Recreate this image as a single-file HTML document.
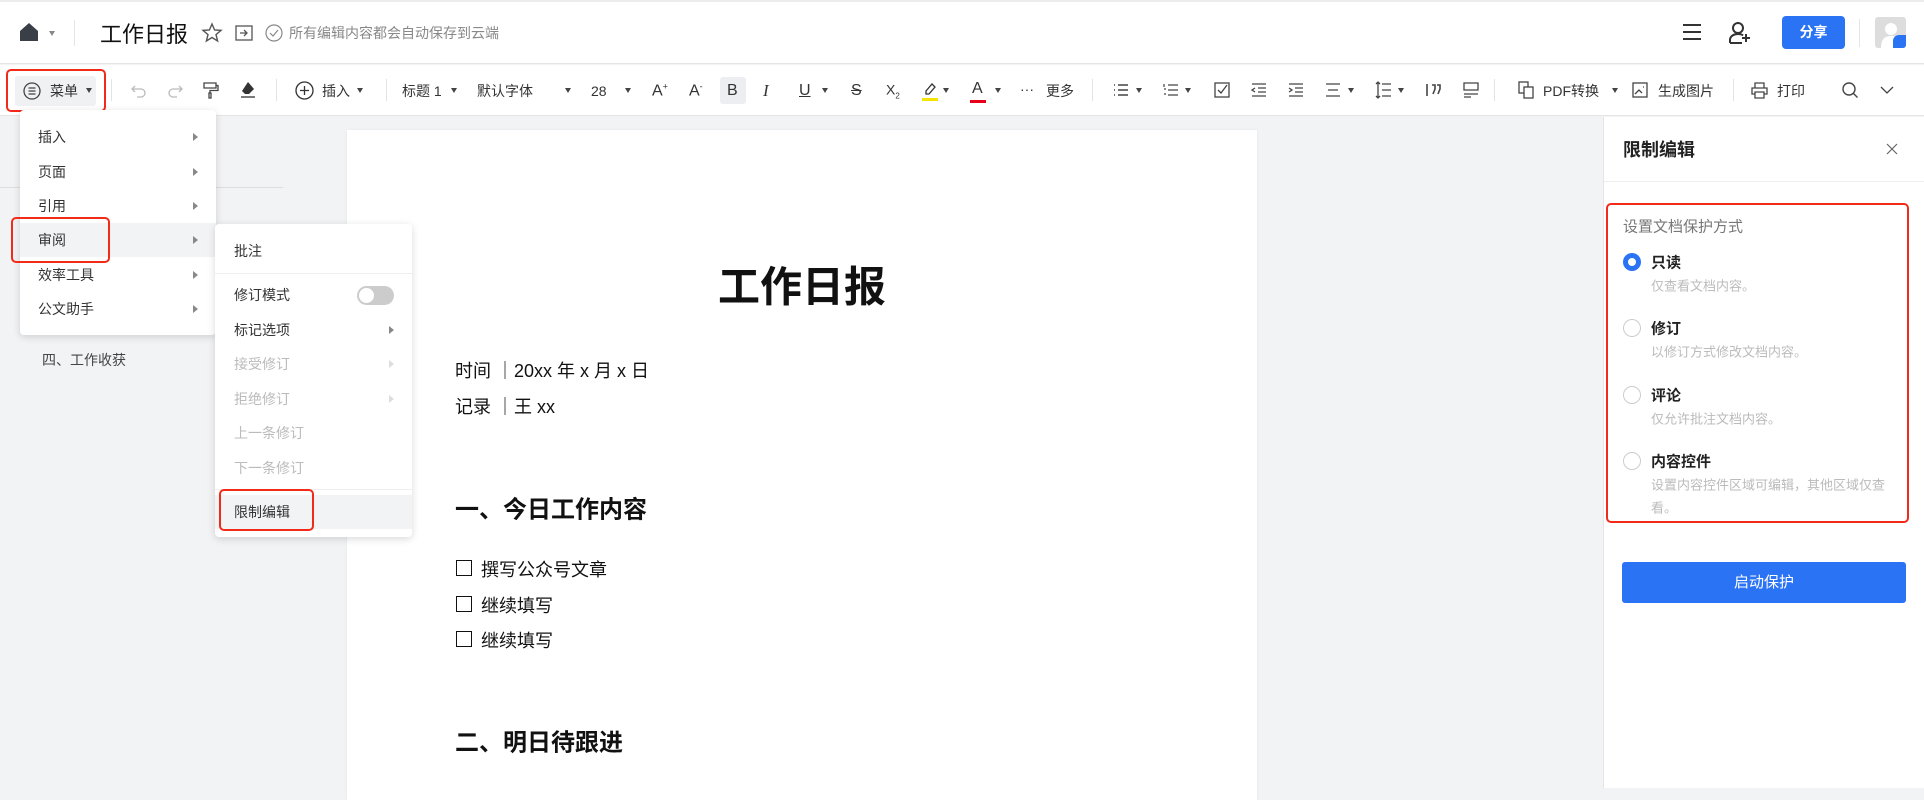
<!DOCTYPE html>
<html><head><meta charset="utf-8"><style>
*{margin:0;padding:0;box-sizing:border-box}
body{width:1924px;height:788px;overflow:hidden;background:#f2f3f5;font-family:"Liberation Sans","Noto Sans CJK SC",sans-serif;color:#222;position:relative}
.a{position:absolute;white-space:nowrap}
.c{transform:translateY(-50%)}
svg{position:absolute;overflow:visible}
.tb{font-size:14px;color:#333}
.mi{font-size:14px;color:#333}
.tri{position:absolute;width:0;height:0;border-top:4px solid transparent;border-bottom:4px solid transparent;border-left:5px solid #888}
.dd{position:absolute;width:0;height:0;border-left:3.5px solid transparent;border-right:3.5px solid transparent;border-top:5px solid #444}
.vd{position:absolute;width:1px;height:22px;background:#e3e3e3;top:79px}
.radio{position:absolute;width:18px;height:18px;border-radius:50%;border:1px solid #ccc;background:#fff}
.cb{position:absolute;width:16px;height:16px;border:1.6px solid #111}
</style></head><body>
<!-- header -->
<div class="a" style="left:0;top:0;width:1924px;height:64px;background:#fff;border-top:2px solid #ececec;border-bottom:1px solid #e5e5e5"></div>
<svg style="left:19px;top:22px" width="20" height="20"><path d="M1 9 L10 1 L19 9 L19 19 L1 19Z" fill="#3a3f47"/></svg>
<div class="dd" style="left:49px;top:31px;border-top-color:#888"></div>
<div class="a" style="left:74px;top:20px;width:1px;height:26px;background:#e5e5e5"></div>
<div class="a c" style="left:100px;top:33px;font-size:22px;color:#111">工作日报</div>
<svg style="left:202px;top:23px" width="20" height="20"><path d="M10 1 L12.6 7 L19 7.4 L14 11.6 L15.6 18 L10 14.5 L4.4 18 L6 11.6 L1 7.4 L7.4 7Z" fill="none" stroke="#555" stroke-width="1.4"/></svg>
<svg style="left:235px;top:25px" width="18" height="16"><rect x="1" y="1" width="16" height="14" fill="none" stroke="#555" stroke-width="1.3"/><path d="M5 8h7M9 5l3 3-3 3" fill="none" stroke="#555" stroke-width="1.3"/></svg>
<svg style="left:265px;top:24px" width="18" height="18"><circle cx="9" cy="9" r="8" fill="none" stroke="#888" stroke-width="1.2"/><path d="M5 9l3 3 5-6" fill="none" stroke="#888" stroke-width="1.2"/></svg>
<div class="a c" style="left:289px;top:33px;font-size:14px;color:#888">所有编辑内容都会自动保存到云端</div>
<svg style="left:1682px;top:23px" width="20" height="18"><path d="M1 2h18M1 9h18M1 16h18" stroke="#333" stroke-width="2"/></svg>
<svg style="left:1728px;top:21px" width="26" height="24"><circle cx="10" cy="7" r="5" fill="none" stroke="#333" stroke-width="2"/><path d="M2 22v-3c0-4 4-6 8-6 2 0 4 .5 5 1.5M2 22h12M18 13v8M14 17h8" fill="none" stroke="#333" stroke-width="2"/></svg>
<div class="a" style="left:1782px;top:16px;width:63px;height:33px;background:#2b73f5;border-radius:4px;color:#fff;font-size:14px;font-weight:bold;text-align:center;line-height:33px">分享</div>
<div class="a" style="left:1859px;top:19px;width:1px;height:28px;background:#e5e5e5"></div>
<div class="a" style="left:1875px;top:17px;width:31px;height:31px;background:#ddd;border-radius:3px;overflow:hidden"><svg style="left:6px;top:5px" width="20" height="26"><circle cx="10" cy="7" r="6" fill="#fff"/><path d="M0 26c0-9 4-12 10-12s10 3 10 12z" fill="#fff"/></svg><div class="a" style="right:0;bottom:0;width:13px;height:13px;background:#2b73f5;border-radius:6px 0 0 0"></div></div>
<!-- toolbar -->
<div class="a" style="left:0;top:65px;width:1924px;height:51px;background:#fff;border-bottom:1px solid #e5e5e5"></div>
<div class="a" style="left:15px;top:76px;width:81px;height:30px;background:#f0f1f3;border-radius:3px"></div>
<svg style="left:23px;top:82px" width="18" height="18"><circle cx="9" cy="9" r="8" fill="none" stroke="#444" stroke-width="1.3"/><path d="M5.5 6h7M5.5 9h7M5.5 12h7" stroke="#444" stroke-width="1.3"/></svg>
<div class="a c tb" style="left:50px;top:91px">菜单</div>
<div class="dd" style="left:86px;top:88px"></div>
<div class="a" style="left:6px;top:69px;width:100px;height:43px;border:2.5px solid #f22a1a;border-radius:5px"></div>
<div class="vd" style="left:111px"></div>
<svg style="left:131px;top:82px" width="16" height="16"><path d="M4 4l-3 3 3 3M1 7h9a4 4 0 0 1 0 8H6" fill="none" stroke="#bbb" stroke-width="1.3"/></svg>
<svg style="left:167px;top:82px" width="16" height="16"><path d="M12 4l3 3-3 3M15 7H6a4 4 0 0 0 0 8h4" fill="none" stroke="#bbb" stroke-width="1.3"/></svg>
<svg style="left:203px;top:82px" width="16" height="17"><path d="M1 1h12v5H1zM13 3.5h2v5H7v3M6 11h2v5H6z" fill="none" stroke="#444" stroke-width="1.3"/></svg>
<svg style="left:240px;top:81px" width="16" height="18"><path d="M8 1l6 7-5 5H5L2 10z" fill="#333"/><path d="M1 16h14" stroke="#333" stroke-width="1.3"/></svg>
<div class="vd" style="left:276px"></div>
<svg style="left:295px;top:81px" width="19" height="19"><circle cx="9.5" cy="9.5" r="8.5" fill="none" stroke="#333" stroke-width="1.3"/><path d="M9.5 5v9M5 9.5h9" stroke="#333" stroke-width="1.3"/></svg>
<div class="a c tb" style="left:322px;top:91px">插入</div><div class="dd" style="left:357px;top:88px"></div>
<div class="vd" style="left:386px"></div>
<div class="a c tb" style="left:402px;top:91px">标题 1</div><div class="dd" style="left:451px;top:88px"></div>
<div class="a c tb" style="left:477px;top:91px">默认字体</div><div class="dd" style="left:565px;top:88px"></div>
<div class="a c tb" style="left:591px;top:91px">28</div><div class="dd" style="left:625px;top:88px"></div>
<div class="a c tb" style="left:652px;top:91px;font-size:16px">A<sup style="font-size:9px">+</sup></div>
<div class="a c tb" style="left:689px;top:91px;font-size:16px">A<sup style="font-size:9px">-</sup></div>
<div class="a" style="left:720px;top:77px;width:26px;height:27px;background:#eceef1;border-radius:3px"></div>
<div class="a c tb" style="left:727px;top:91px;font-size:16px">B</div>
<div class="a c tb" style="left:763px;top:91px;font-size:17px;font-style:italic;font-family:'Liberation Serif',serif">I</div>
<div class="a c tb" style="left:799px;top:91px;font-size:16px;text-decoration:underline">U</div><div class="dd" style="left:822px;top:88px"></div>
<div class="a c tb" style="left:851px;top:91px;font-size:16px;text-decoration:line-through">S</div>
<div class="a c tb" style="left:886px;top:91px;font-size:14px">X<sub style="font-size:8px">2</sub></div>
<svg style="left:922px;top:80px" width="16" height="22"><path d="M4 11l6-7 3 3-6 7H4z" fill="none" stroke="#333" stroke-width="1.3"/><rect x="0" y="18" width="16" height="3" fill="#f5e300"/></svg><div class="dd" style="left:943px;top:88px"></div>
<div class="a c tb" style="left:972px;top:89px;font-size:16px">A</div><div class="a" style="left:970px;top:100px;width:16px;height:3px;background:#e8001a"></div><div class="dd" style="left:995px;top:88px"></div>
<div class="a c tb" style="left:1020px;top:89px">···</div>
<div class="a c tb" style="left:1046px;top:91px">更多</div>
<div class="vd" style="left:1092px"></div>
<svg style="left:1113px;top:82px" width="16" height="16"><path d="M1 3h1M1 8h1M1 13h1M5 3h10M5 8h10M5 13h10" stroke="#444" stroke-width="1.4"/></svg><div class="dd" style="left:1136px;top:88px"></div>
<svg style="left:1163px;top:82px" width="16" height="16"><path d="M1 2v3M1 7h2M1 12h2M5 3h10M5 8h10M5 13h10" stroke="#444" stroke-width="1.2"/></svg><div class="dd" style="left:1185px;top:88px"></div>
<svg style="left:1214px;top:82px" width="16" height="16"><rect x="1" y="1" width="14" height="14" fill="none" stroke="#444" stroke-width="1.3"/><path d="M4 8l3 3 6-8" fill="none" stroke="#444" stroke-width="1.3"/></svg>
<svg style="left:1251px;top:82px" width="16" height="16"><path d="M1 2h14M7 6h8M7 10h8M1 14h14M4 6l-3 2 3 2" fill="none" stroke="#444" stroke-width="1.3"/></svg>
<svg style="left:1288px;top:82px" width="16" height="16"><path d="M1 2h14M7 6h8M7 10h8M1 14h14M1 6l3 2-3 2" fill="none" stroke="#444" stroke-width="1.3"/></svg>
<svg style="left:1325px;top:82px" width="16" height="16"><path d="M1 2h14M3 8h10M1 14h14" stroke="#444" stroke-width="1.3"/></svg><div class="dd" style="left:1348px;top:88px"></div>
<svg style="left:1375px;top:81px" width="16" height="18"><path d="M3 1v16M1 3l2-2 2 2M1 15l2 2 2-2M7 3h9M7 9h9M7 15h9" fill="none" stroke="#444" stroke-width="1.3"/></svg><div class="dd" style="left:1398px;top:88px"></div>
<svg style="left:1426px;top:83px" width="16" height="14"><path d="M1 1v12" stroke="#444" stroke-width="1.6"/><path d="M6 2h3v4l-2 5M11 2h3v4l-2 5" fill="none" stroke="#444" stroke-width="1.6"/></svg>
<svg style="left:1463px;top:82px" width="16" height="16"><path d="M1 1h14v7H1zM1 12h14M1 15h7" fill="none" stroke="#444" stroke-width="1.3"/></svg>
<div class="vd" style="left:1494px"></div>
<svg style="left:1518px;top:81px" width="16" height="18"><rect x="1" y="1" width="9" height="11" fill="none" stroke="#444" stroke-width="1.3"/><rect x="6" y="6" width="9" height="11" fill="#fff" stroke="#444" stroke-width="1.3"/></svg>
<div class="a c tb" style="left:1543px;top:91px">PDF转换</div><div class="dd" style="left:1612px;top:88px"></div>
<svg style="left:1632px;top:82px" width="16" height="16"><rect x="1" y="1" width="14" height="14" fill="none" stroke="#444" stroke-width="1.3"/><path d="M3 12l4-4 3 3M11 5h1" fill="none" stroke="#444" stroke-width="1.3"/></svg>
<div class="a c tb" style="left:1658px;top:91px">生成图片</div>
<div class="vd" style="left:1733px"></div>
<svg style="left:1751px;top:82px" width="17" height="17"><path d="M4 6V1h9v5M4 12H1V6h15v6h-3M4 10h9v6H4z" fill="none" stroke="#444" stroke-width="1.3"/></svg>
<div class="a c tb" style="left:1777px;top:91px">打印</div>
<svg style="left:1842px;top:82px" width="17" height="17"><circle cx="7" cy="7" r="6" fill="none" stroke="#444" stroke-width="1.4"/><path d="M11.5 11.5l4 4" stroke="#444" stroke-width="1.4"/></svg>
<svg style="left:1880px;top:85px" width="14" height="10"><path d="M1 2l6 6 6-6" fill="none" stroke="#444" stroke-width="1.3"/></svg>
<!-- sidebar -->
<div class="a" style="left:0;top:187px;width:283px;height:1px;background:#ddd"></div>
<div class="a c" style="left:42px;top:360px;font-size:14px;color:#444">四、工作收获</div>
<!-- page -->
<div class="a" style="left:347px;top:130px;width:910px;height:670px;background:#fff;box-shadow:0 0 3px rgba(0,0,0,.06)"></div>
<div class="a c" style="left:718px;top:284px;font-size:42px;font-weight:bold;color:#111">工作日报</div>
<div class="a c" style="left:455px;top:370px;font-size:18px;color:#111">时间 ｜20xx 年 x 月 x 日</div>
<div class="a c" style="left:455px;top:406px;font-size:18px;color:#111">记录 ｜王 xx</div>
<div class="a c" style="left:455px;top:507px;font-size:24px;font-weight:bold;color:#111">一、今日工作内容</div>
<div class="cb" style="left:456px;top:560px"></div><div class="a c" style="left:481px;top:569px;font-size:18px;color:#111">撰写公众号文章</div>
<div class="cb" style="left:456px;top:596px"></div><div class="a c" style="left:481px;top:605px;font-size:18px;color:#111">继续填写</div>
<div class="cb" style="left:456px;top:631px"></div><div class="a c" style="left:481px;top:640px;font-size:18px;color:#111">继续填写</div>
<div class="a c" style="left:455px;top:740px;font-size:24px;font-weight:bold;color:#111">二、明日待跟进</div>
<!-- menu -->
<div class="a" style="left:20px;top:110px;width:196px;height:225px;background:#fff;border-radius:4px;box-shadow:0 2px 8px rgba(0,0,0,.15)"></div>
<div class="a" style="left:20px;top:223px;width:196px;height:34px;background:#f2f3f5"></div>
<div class="a c mi" style="left:38px;top:137px">插入</div><div class="tri" style="left:193px;top:133px"></div>
<div class="a c mi" style="left:38px;top:172px">页面</div><div class="tri" style="left:193px;top:168px"></div>
<div class="a c mi" style="left:38px;top:206px">引用</div><div class="tri" style="left:193px;top:202px"></div>
<div class="a c mi" style="left:38px;top:240px">审阅</div><div class="tri" style="left:193px;top:236px"></div>
<div class="a c mi" style="left:38px;top:275px">效率工具</div><div class="tri" style="left:193px;top:271px"></div>
<div class="a c mi" style="left:38px;top:309px">公文助手</div><div class="tri" style="left:193px;top:305px"></div>
<div class="a" style="left:11px;top:217px;width:99px;height:46px;border:2.5px solid #f22a1a;border-radius:5px"></div>
<!-- submenu -->
<div class="a" style="left:215px;top:224px;width:197px;height:313px;background:#fff;border-radius:4px;box-shadow:0 2px 8px rgba(0,0,0,.15)"></div>
<div class="a" style="left:215px;top:273px;width:197px;height:1px;background:#eee"></div>
<div class="a" style="left:215px;top:489px;width:197px;height:1px;background:#eee"></div>
<div class="a" style="left:215px;top:495px;width:197px;height:34px;background:#f2f3f5"></div>
<div class="a c mi" style="left:234px;top:251px">批注</div>
<div class="a c mi" style="left:234px;top:295px">修订模式</div>
<div class="a" style="left:357px;top:286px;width:37px;height:19px;border-radius:10px;background:#ccc"></div><div class="a" style="left:359px;top:288px;width:15px;height:15px;border-radius:50%;background:#fff"></div>
<div class="a c mi" style="left:234px;top:330px">标记选项</div><div class="tri" style="left:389px;top:326px"></div>
<div class="a c mi" style="left:234px;top:364px;color:#bbb">接受修订</div><div class="tri" style="left:389px;top:360px;border-left-color:#ddd"></div>
<div class="a c mi" style="left:234px;top:399px;color:#bbb">拒绝修订</div><div class="tri" style="left:389px;top:395px;border-left-color:#ddd"></div>
<div class="a c mi" style="left:234px;top:433px;color:#bbb">上一条修订</div>
<div class="a c mi" style="left:234px;top:468px;color:#bbb">下一条修订</div>
<div class="a c mi" style="left:234px;top:512px">限制编辑</div>
<div class="a" style="left:219px;top:489px;width:95px;height:42px;border:2.5px solid #f22a1a;border-radius:5px"></div>
<!-- right panel -->
<div class="a" style="left:1603px;top:117px;width:321px;height:671px;background:#fff;border-left:1px solid #e5e5e5"></div>
<div class="a c" style="left:1623px;top:149px;font-size:18px;font-weight:bold;color:#222">限制编辑</div>
<svg style="left:1886px;top:143px" width="12" height="12"><path d="M1 1l10 10M11 1L1 11" stroke="#666" stroke-width="1.2"/></svg>
<div class="a" style="left:1604px;top:181px;width:320px;height:1px;background:#eee"></div>
<div class="a" style="left:1606px;top:203px;width:303px;height:320px;border:2.5px solid #f22a1a;border-radius:5px"></div>
<div class="a c" style="left:1623px;top:226px;font-size:15px;color:#777">设置文档保护方式</div>
<div class="radio" style="left:1623px;top:253px;border:5px solid #2b73f5"></div>
<div class="a c" style="left:1651px;top:262px;font-size:15px;font-weight:bold;color:#222">只读</div>
<div class="a c" style="left:1651px;top:285px;font-size:13px;color:#bbb">仅查看文档内容。</div>
<div class="radio" style="left:1623px;top:319px"></div>
<div class="a c" style="left:1651px;top:328px;font-size:15px;font-weight:bold;color:#222">修订</div>
<div class="a c" style="left:1651px;top:351px;font-size:13px;color:#bbb">以修订方式修改文档内容。</div>
<div class="radio" style="left:1623px;top:386px"></div>
<div class="a c" style="left:1651px;top:395px;font-size:15px;font-weight:bold;color:#222">评论</div>
<div class="a c" style="left:1651px;top:418px;font-size:13px;color:#bbb">仅允许批注文档内容。</div>
<div class="radio" style="left:1623px;top:452px"></div>
<div class="a c" style="left:1651px;top:461px;font-size:15px;font-weight:bold;color:#222">内容控件</div>
<div class="a c" style="left:1651px;top:484px;font-size:13px;color:#bbb">设置内容控件区域可编辑，其他区域仅查</div>
<div class="a c" style="left:1651px;top:507px;font-size:13px;color:#bbb">看。</div>
<div class="a" style="left:1622px;top:562px;width:284px;height:41px;background:#2b73f5;border-radius:3px;color:#fff;font-size:15px;text-align:center;line-height:41px">启动保护</div>
</body></html>
